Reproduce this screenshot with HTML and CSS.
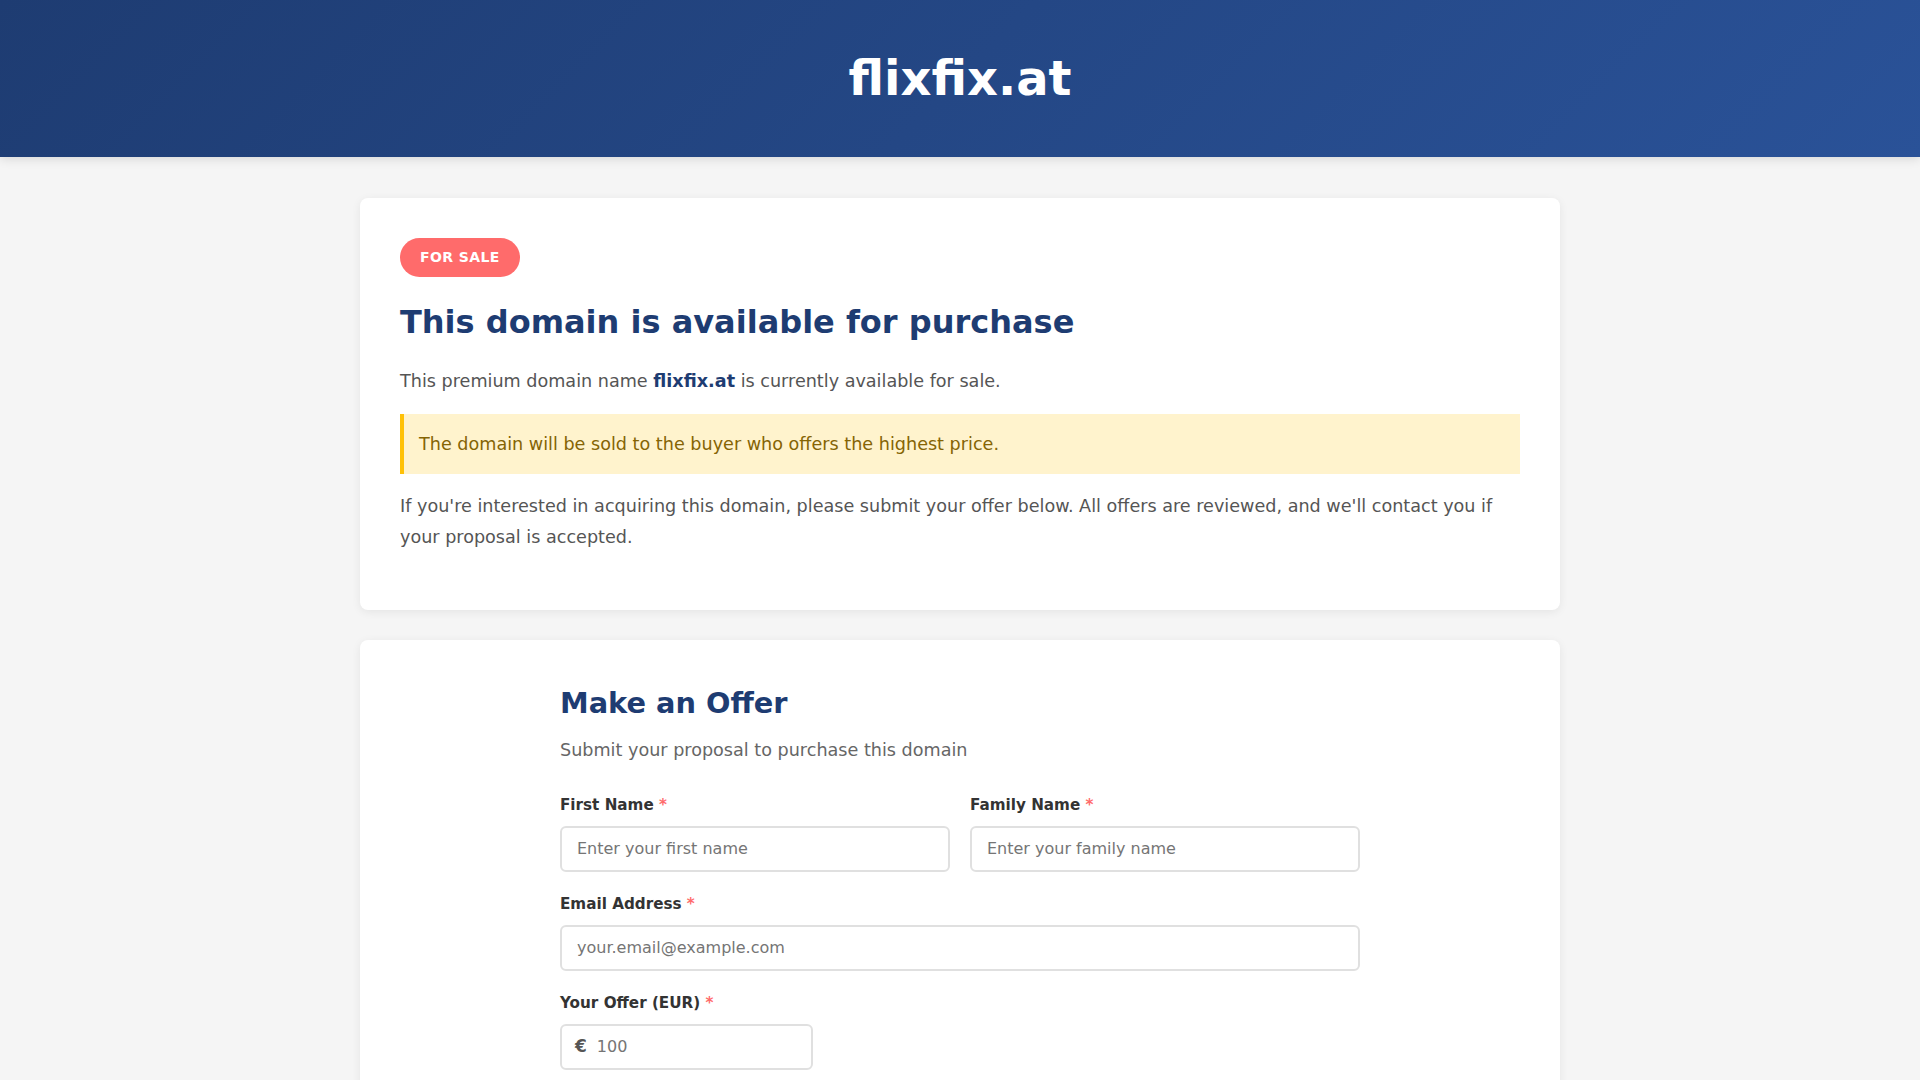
FILE: index.html
```html
<!DOCTYPE html>
<html lang="en">
<head>
<meta charset="utf-8">
<title>flixfix.at - Domain for Sale</title>
<link rel="stylesheet" href="styles.css">
</head>
<body>
<header class="site-header">
  <h1 class="site-title">flixfix.at</h1>
</header>
<main class="container">
  <section class="card info-card">
    <span class="badge">FOR SALE</span>
    <h2 class="headline">This domain is available for purchase</h2>
    <p class="text">This premium domain name <strong class="domain">flixfix.at</strong> is currently available for sale.</p>
    <div class="notice">The domain will be sold to the buyer who offers the highest price.</div>
    <p class="text">If you're interested in acquiring this domain, please submit your offer below. All offers are reviewed, and we'll contact you if your proposal is accepted.</p>
  </section>
  <section class="card offer-card">
    <form class="offer-form">
      <h2 class="form-title">Make an Offer</h2>
      <p class="form-subtitle">Submit your proposal to purchase this domain</p>
      <div class="form-row">
        <div class="form-group">
          <label class="label" for="first">First Name <span class="req">*</span></label>
          <input class="input" id="first" type="text" placeholder="Enter your first name">
        </div>
        <div class="form-group">
          <label class="label" for="family">Family Name <span class="req">*</span></label>
          <input class="input" id="family" type="text" placeholder="Enter your family name">
        </div>
      </div>
      <div class="form-group">
        <label class="label" for="email">Email Address <span class="req">*</span></label>
        <input class="input" id="email" type="email" placeholder="your.email@example.com">
      </div>
      <div class="form-group">
        <label class="label" for="offer">Your Offer (EUR) <span class="req">*</span></label>
        <div class="offer-field">
          <span class="currency">€</span>
          <input class="offer-input" id="offer" type="number" placeholder="100">
        </div>
      </div>
    </form>
  </section>
</main>
</body>
</html>
```

FILE: styles.css
```css
* {
  box-sizing: border-box;
}

html, body {
  margin: 0;
  padding: 0;
}

body {
  font-family: "DejaVu Sans", "Liberation Sans", sans-serif;
  background: #f5f5f5;
  color: #555;
  font-size: 17.6px;
  line-height: 1.8;
}

.site-header {
  background: linear-gradient(135deg, #1e3c72 0%, #2a5298 100%);
  padding: 50px 20px 49px;
  text-align: center;
  box-shadow: 0 2px 10px rgba(0, 0, 0, 0.12);
}

.site-title {
  margin: 0;
  color: #fff;
  font-size: 48px;
  line-height: 57.6px;
  font-weight: 700;
}

.container {
  max-width: 1200px;
  margin: 0 auto;
  padding: 41px 0 40px;
}

.card {
  background: #fff;
  border-radius: 8px;
  box-shadow: 0 2px 10px rgba(0, 0, 0, 0.07);
  padding: 40px;
  margin-bottom: 30px;
}

.badge {
  display: inline-block;
  background: #ff6b6b;
  color: #fff;
  font-size: 14px;
  font-weight: 700;
  letter-spacing: 0.4px;
  line-height: 17px;
  padding: 11px 20px;
  border-radius: 20px;
}

.headline {
  margin: 26px 0 25.5px;
  color: #1e3c72;
  font-size: 32px;
  line-height: 1.2;
  font-weight: 700;
}

.text {
  margin: 0 0 16px;
}

.domain {
  color: #1e3c72;
  font-weight: 700;
}

.notice {
  background: #fff3cd;
  border-left: 4px solid #ffc107;
  color: #856404;
  padding: 15px 15px;
  line-height: 30px;
  margin: 0 0 16.5px;
}

.offer-card {
  padding-top: 46px;
}

.offer-form {
  max-width: 800px;
  margin: 0 auto;
}

.form-title {
  margin: 0 0 14px;
  color: #1e3c72;
  font-size: 28.8px;
  line-height: 1.2;
  font-weight: 700;
}

.form-subtitle {
  margin: 0 0 30px;
  color: #666;
}

.form-row {
  display: grid;
  grid-template-columns: 1fr 1fr;
  gap: 20px;
}

.form-group {
  margin-bottom: 23.5px;
}

.label {
  display: block;
  font-size: 15.2px;
  line-height: 19.2px;
  font-weight: 700;
  color: #333;
  margin-bottom: 10.3px;
}

.req {
  color: #ff6b6b;
}

.input {
  display: block;
  width: 100%;
  height: 46px;
  padding: 0 15px;
  border: 2px solid #e0e0e0;
  border-radius: 6px;
  font-family: inherit;
  font-size: 16px;
  color: #333;
  background: #fff;
  outline: none;
}

.input::placeholder,
.offer-input::placeholder {
  color: #757575;
}

.offer-field {
  display: flex;
  align-items: center;
  width: 253px;
  height: 46px;
  border: 2px solid #e0e0e0;
  border-radius: 6px;
  background: #fff;
  padding: 0 13px;
  gap: 10px;
}

.currency {
  font-size: 17px;
  font-weight: 700;
  color: #555;
}

.offer-input {
  flex: 1;
  min-width: 0;
  border: none;
  outline: none;
  padding: 0;
  font-family: inherit;
  font-size: 16px;
  color: #333;
  background: transparent;
}
```
